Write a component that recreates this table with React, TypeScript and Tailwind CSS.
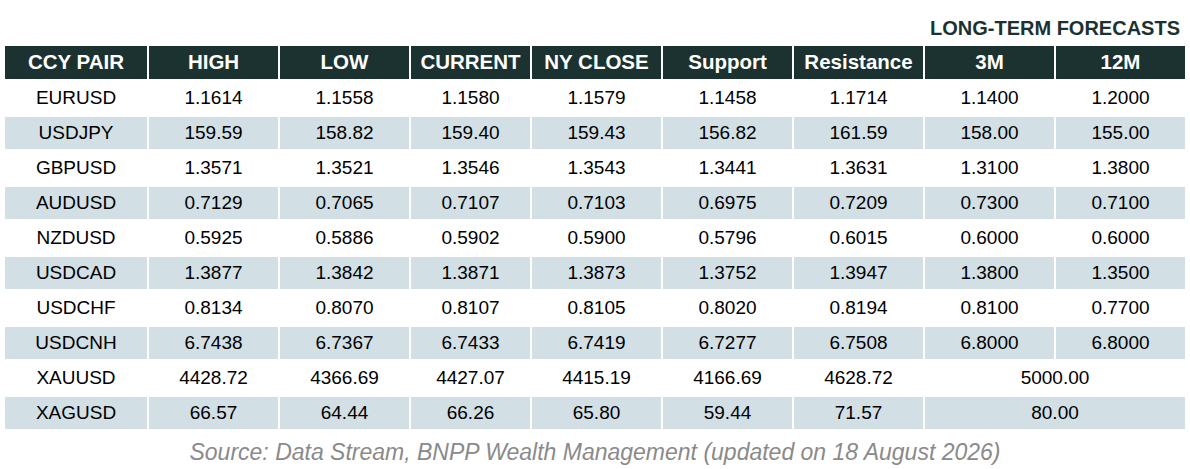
import React from "react";

type Row = { pair: string; v: string[]; merged?: string };

const rows: Row[] = [
  { pair: "EURUSD", v: ["1.1614", "1.1558", "1.1580", "1.1579", "1.1458", "1.1714", "1.1400", "1.2000"] },
  { pair: "USDJPY", v: ["159.59", "158.82", "159.40", "159.43", "156.82", "161.59", "158.00", "155.00"] },
  { pair: "GBPUSD", v: ["1.3571", "1.3521", "1.3546", "1.3543", "1.3441", "1.3631", "1.3100", "1.3800"] },
  { pair: "AUDUSD", v: ["0.7129", "0.7065", "0.7107", "0.7103", "0.6975", "0.7209", "0.7300", "0.7100"] },
  { pair: "NZDUSD", v: ["0.5925", "0.5886", "0.5902", "0.5900", "0.5796", "0.6015", "0.6000", "0.6000"] },
  { pair: "USDCAD", v: ["1.3877", "1.3842", "1.3871", "1.3873", "1.3752", "1.3947", "1.3800", "1.3500"] },
  { pair: "USDCHF", v: ["0.8134", "0.8070", "0.8107", "0.8105", "0.8020", "0.8194", "0.8100", "0.7700"] },
  { pair: "USDCNH", v: ["6.7438", "6.7367", "6.7433", "6.7419", "6.7277", "6.7508", "6.8000", "6.8000"] },
  { pair: "XAUUSD", v: ["4428.72", "4366.69", "4427.07", "4415.19", "4166.69", "4628.72"], merged: "5000.00" },
  { pair: "XAGUSD", v: ["66.57", "64.44", "66.26", "65.80", "59.44", "71.57"], merged: "80.00" },
];

const headers = ["CCY PAIR", "HIGH", "LOW", "CURRENT", "NY CLOSE", "Support", "Resistance", "3M", "12M"];

const cols = "grid grid-cols-[142px_129px_129px_119px_129px_129px_129px_129px_129px] gap-x-[2px]";

export default function App() {
  return (
    <div
      className="w-[1190px] h-[469px] bg-white px-[5px]"
      style={{ fontFamily: '"Liberation Sans", Arial, sans-serif' }}
    >
      <div className={`${cols} h-[46px]`}>
        <div className="col-start-8 col-span-2 pt-[16px] text-center text-[20px] leading-[24px] font-bold text-[#1c3230] whitespace-nowrap">
          LONG-TERM FORECASTS
        </div>
      </div>
      <div className={`${cols} gap-y-[3px]`}>
        {headers.map((h) => (
          <div
            key={h}
            className="h-[33px] bg-[#1c3230] text-white font-bold text-[20.5px] flex items-center justify-center whitespace-nowrap"
          >
            {h}
          </div>
        ))}
        {rows.map((r, i) => {
          const shade = i % 2 === 1 ? "bg-[#d2dfe5]" : "bg-white";
          const cell = `h-[32px] ${shade} text-black text-[19px] flex items-center justify-center whitespace-nowrap`;
          return (
            <React.Fragment key={r.pair}>
              <div className={cell}>{r.pair}</div>
              {r.v.map((x, j) => (
                <div key={j} className={cell}>
                  {x}
                </div>
              ))}
              {r.merged && <div className={`${cell} col-span-2`}>{r.merged}</div>}
            </React.Fragment>
          );
        })}
      </div>
      <div className="mt-[10px] text-center italic text-[23px] leading-[26px] text-[#8a8a8a] whitespace-nowrap">
        Source: Data Stream, BNPP Wealth Management (updated on 18 August 2026)
      </div>
    </div>
  );
}
